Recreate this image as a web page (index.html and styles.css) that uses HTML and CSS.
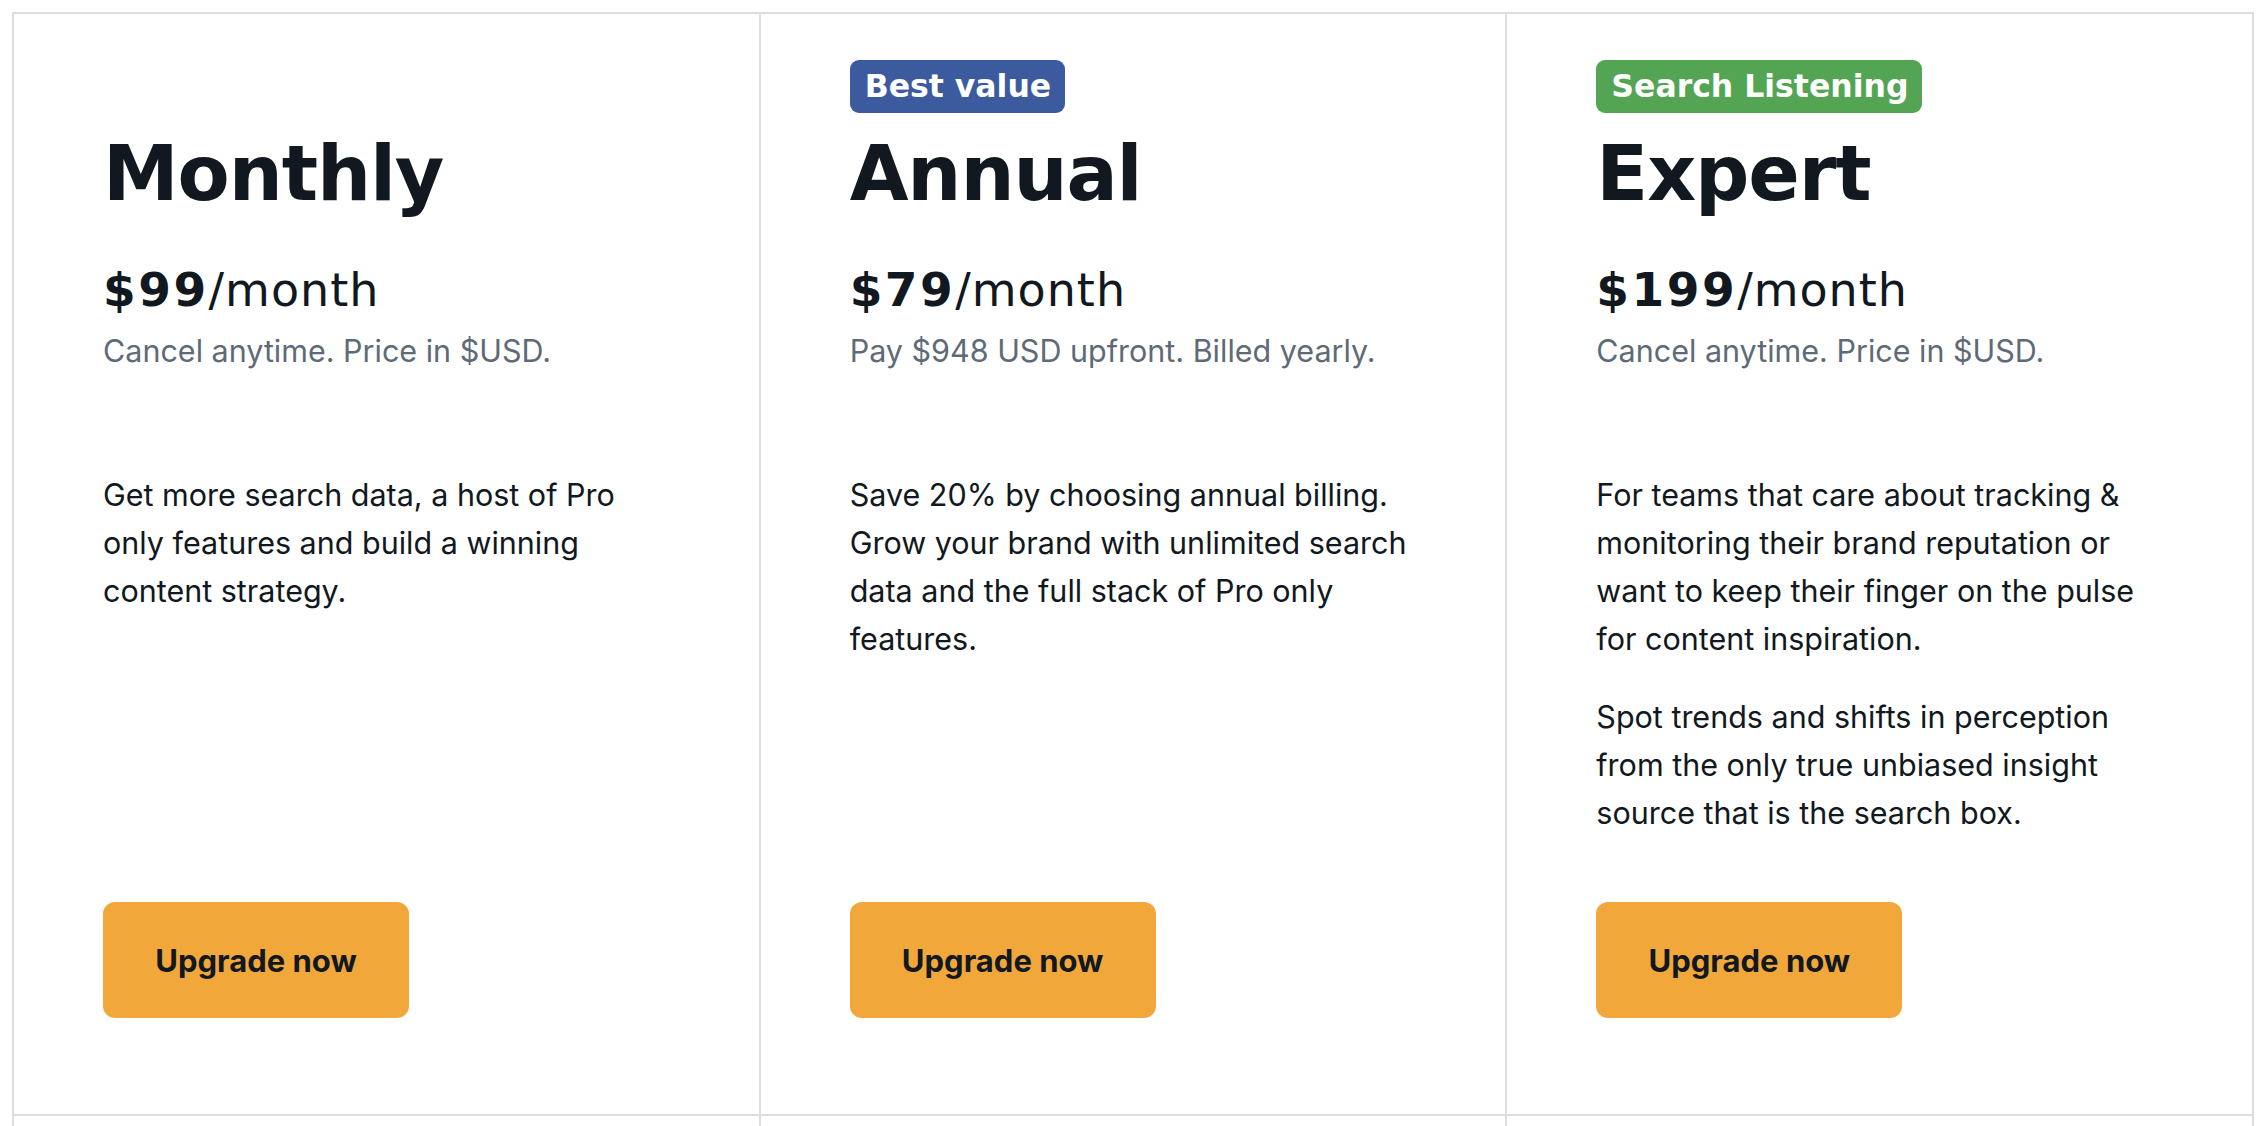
FILE: index.html
```html
<!DOCTYPE html>
<html lang="en">
<head>
<meta charset="utf-8">
<title>Pricing</title>
<link rel="stylesheet" href="styles.css">
</head>
<body>
<div class="plans">
  <div class="plan">
    <div class="badge-slot"></div>
    <h2 class="plan-name">Monthly</h2>
    <div class="price"><strong>$99</strong>/month</div>
    <div class="price-note">Cancel anytime. Price in $USD.</div>
    <div class="desc">
      <p>Get more search data, a host of Pro only features and build a winning content strategy.</p>
    </div>
    <div class="actions"><a class="btn" href="#">Upgrade now</a></div>
  </div>
  <div class="plan">
    <div class="badge-slot"><span class="badge badge-blue">Best value</span></div>
    <h2 class="plan-name">Annual</h2>
    <div class="price"><strong>$79</strong>/month</div>
    <div class="price-note">Pay $948 USD upfront. Billed yearly.</div>
    <div class="desc">
      <p>Save 20% by choosing annual billing. Grow your brand with unlimited search data and the full stack of Pro only features.</p>
    </div>
    <div class="actions"><a class="btn" href="#">Upgrade now</a></div>
  </div>
  <div class="plan">
    <div class="badge-slot"><span class="badge badge-green">Search Listening</span></div>
    <h2 class="plan-name">Expert</h2>
    <div class="price"><strong>$199</strong>/month</div>
    <div class="price-note">Cancel anytime. Price in $USD.</div>
    <div class="desc">
      <p>For teams that care about tracking &amp; monitoring their brand reputation or want to keep their finger on the pulse for content inspiration.</p>
      <p>Spot trends and shifts in perception from the only true unbiased insight source that is the search box.</p>
    </div>
    <div class="actions"><a class="btn" href="#">Upgrade now</a></div>
  </div>
  <div class="plan plan-empty"></div>
  <div class="plan plan-empty"></div>
  <div class="plan plan-empty"></div>
</div>
</body>
</html>
```

FILE: styles.css
```css
* { box-sizing: border-box; }
html, body { margin: 0; padding: 0; background: #fff; }
body {
  font-family: Inter, "Liberation Sans", sans-serif;
  color: #111820;
}
.plans {
  margin: 12px 12px 0 12px;
  display: grid;
  grid-template-columns: repeat(3, 1fr);
  border-top: 2px solid #dddddd;
  border-left: 2px solid #dddddd;
}
.plan {
  border-right: 2px solid #dddddd;
  border-bottom: 2px solid #dddddd;
  padding: 46px 92px 96px 89px;
  display: flex;
  flex-direction: column;
}
.plan-empty { height: 200px; }
.badge-slot {
  height: 53px;
  display: flex;
  align-items: flex-start;
}
.badge {
  display: inline-block;
  height: 53px;
  line-height: 53px;
  padding: 0 14px 0 15px;
  border-radius: 9px;
  color: #fff;
  font-family: "DejaVu Sans", Inter, sans-serif;
  font-weight: 700;
  font-size: 31.5px;
}
.badge-blue { background: #3c5b9e; }
.badge-green { background: #53a553; }
.plan-name {
  margin: 18px 0 0 0;
  font-family: "DejaVu Sans", Inter, sans-serif;
  font-size: 76px;
  line-height: 86px;
  font-weight: 700;
  letter-spacing: -1.1px;
}
.price {
  margin-top: 46px;
  font-family: "DejaVu Sans", Inter, sans-serif;
  font-size: 46px;
  line-height: 54px;
  font-weight: 400;
  letter-spacing: 1px;
}
.price strong { font-weight: 700; font-size: 47px; letter-spacing: 2.5px; }
.price-note {
  margin-top: 10px;
  font-size: 30.5px;
  line-height: 48px;
  color: #5f6a77;
}
.desc {
  margin-top: 96px;
  flex: 1;
  font-size: 30.5px;
  line-height: 48px;
  color: #111820;
}
.desc p { margin: 0 0 30px 0; }
.desc p:last-child { margin-bottom: 0; }
.actions { margin-top: 65px; }
.btn {
  display: inline-flex;
  align-items: center;
  justify-content: center;
  width: 306px;
  height: 116px;
  border-radius: 12px;
  background: #f2a73b;
  color: #111820;
  text-decoration: none;
  font-weight: 700;
  font-size: 31px;
}
```
